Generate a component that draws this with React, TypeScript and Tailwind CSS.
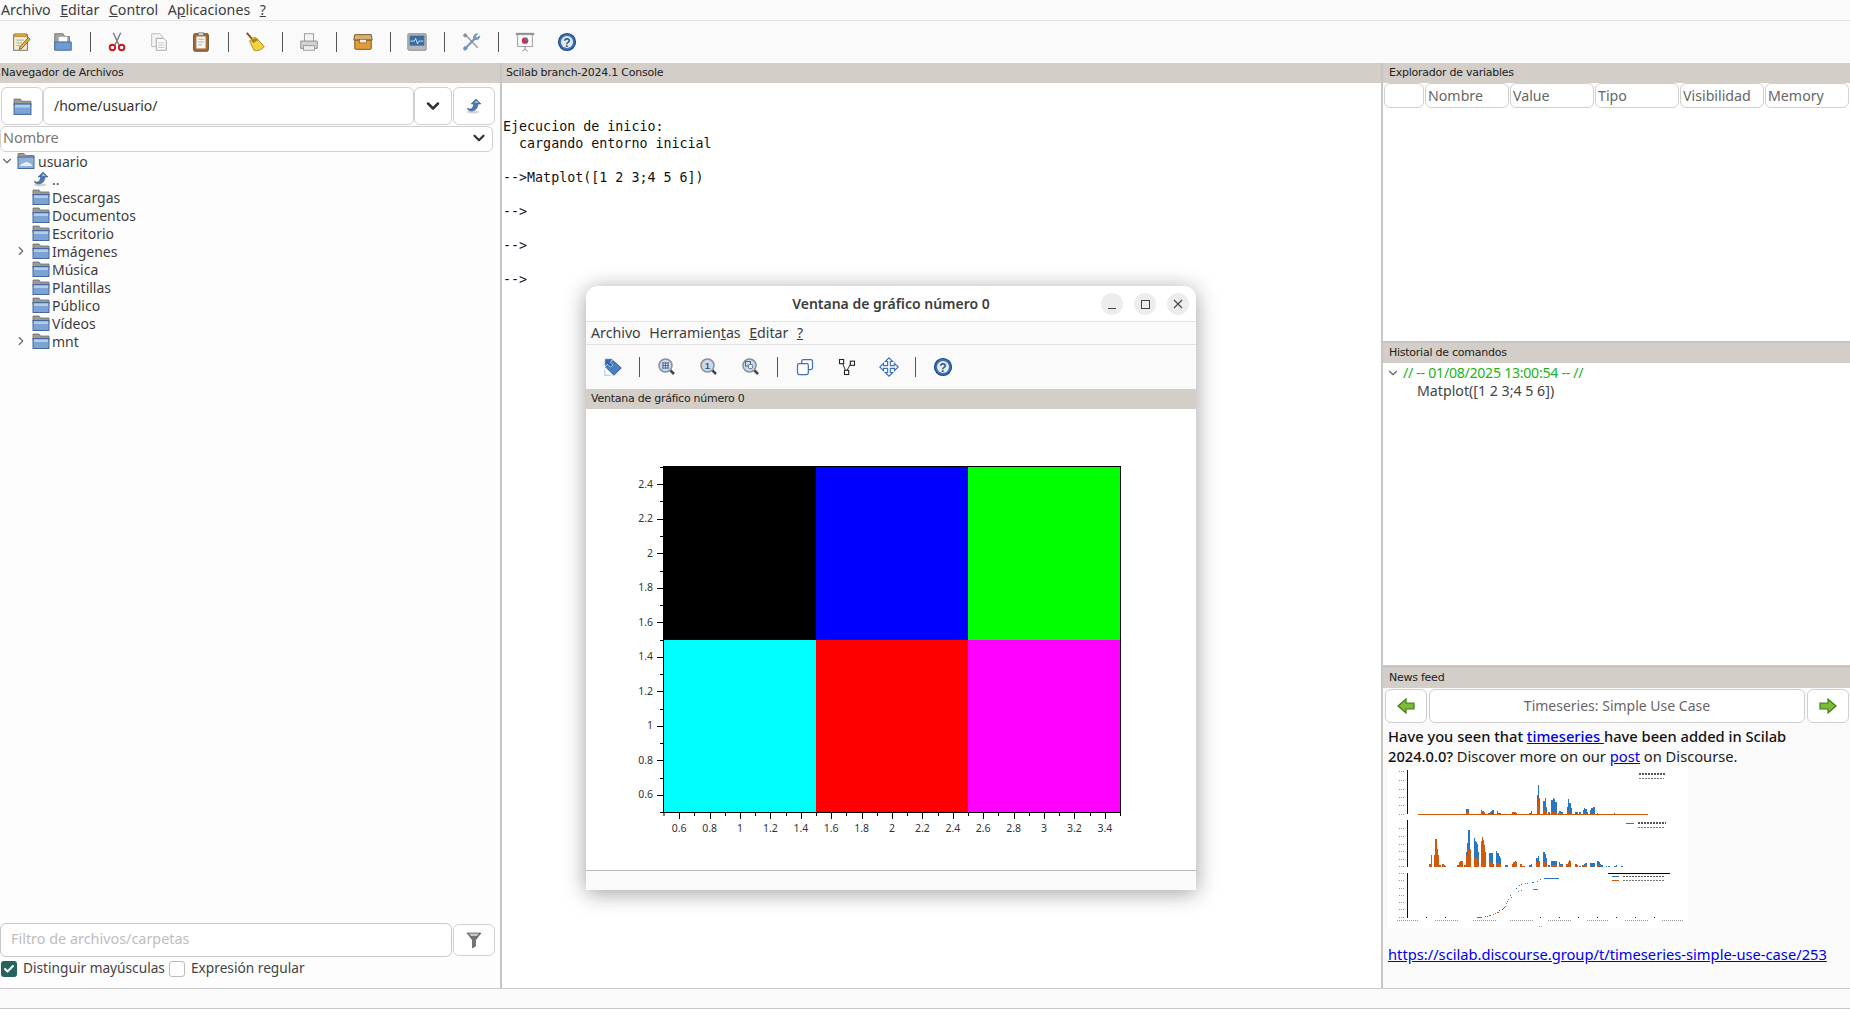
import React from 'react';
import { Check, ChevronDown, ChevronRight } from 'lucide-react';

type Bar = [number, number | null, number | null];

const Sep = () => <div className="w-px h-[20px] mx-[5.5px] bg-[#555]" />;

const ToolBtn = ({ children }: { children: React.ReactNode }) => (
  <div className="w-[42px] h-full flex items-center justify-center">{children}</div>
);

const Ico = ({ children, size = 22 }: { children: React.ReactNode; size?: number }) => (
  <svg width={size} height={size} viewBox="0 0 24 24" fill="none">
    {children}
  </svg>
);

const FolderIcon = ({ size = 18 }: { size?: number }) => (
  <svg width={size} height={size} viewBox="0 0 18 18">
    <path d="M1 2h6l1.500 2H17v4H1z" fill="#9a9a96" stroke="#6d6d6a" strokeWidth="0.8" />
    <rect x="1" y="6.500" width="16" height="10" fill="#7ba4d4" stroke="#46699a" strokeWidth="1" />
    <rect x="2" y="7.500" width="14" height="2.500" fill="#b4cce8" />
  </svg>
);

const HomeFolder = () => (
  <svg width="18" height="18" viewBox="0 0 18 18">
    <path d="M1 1.500h6l1.500 2H17v3H1z" fill="#9a9a96" stroke="#6d6d6a" strokeWidth="0.8" />
    <rect x="1" y="5" width="16" height="11.500" fill="#8fb2dc" stroke="#46699a" strokeWidth="1" />
    <path d="M3 14c1-3 3-2 4-3 1-1.500 4-1.500 5 0 1 0 3 1 3 3z" fill="#e9f0f8" />
  </svg>
);

const UpIcon = () => (
  <svg width="18" height="18" viewBox="0 0 18 18">
    <ellipse cx="8" cy="15" rx="6.500" ry="1.500" fill="#d4d4d4" />
    <path d="M11 2l5 5h-3c0 4-3 7-6.500 7C4 14 2.500 13 2.500 11c1 1 2 1.300 3 1 2-.5 3-2.500 3-5H6z" fill="#4c79ae" stroke="#2c4f7c" strokeWidth="0.5" />
    <path d="M11 3.500L13.500 6H10z" fill="#a9c6e6" />
  </svg>
);

const HelpIcon = () => (
  <svg width="20" height="20" viewBox="0 0 20 20">
    <circle cx="10" cy="10" r="8.500" fill="#3f72b5" stroke="#1f4a85" strokeWidth="1.200" />
    <circle cx="10" cy="10" r="6" fill="#e4ecf6" />
    <text x="10" y="14.500" textAnchor="middle" fontSize="12" fontWeight="700" fill="#2a5796" fontFamily="Liberation Sans">?</text>
  </svg>
);

const Magnifier = ({ children }: { children?: React.ReactNode }) => (
  <svg width="20" height="20" viewBox="0 0 20 20">
    <line x1="12.500" y1="12.500" x2="17" y2="17" stroke="#444" strokeWidth="2.500" />
    <circle cx="8.500" cy="8.500" r="6.500" fill="#cfd8e4" stroke="#8a8f98" strokeWidth="1.500" />
    {children}
  </svg>
);

const MainToolbar = () => (
  <div className="h-[42px] flex items-center bg-[#fafafa]">
    <ToolBtn>
      <Ico>
        <rect x="4" y="4" width="15" height="17" fill="#f4edd3" stroke="#6d6a5e" />
        <path d="M5 3h13v3H5z" fill="#e0a93c" stroke="#9a7323" strokeWidth="0.7" />
        <path d="M7 10h8M7 13h6M7 16h4" stroke="#a8a48f" />
        <path d="M11 17l9-10 2 2-9 10-3 1z" fill="#e3b04b" stroke="#6b4a12" strokeWidth="0.8" />
      </Ico>
    </ToolBtn>
    <ToolBtn>
      <Ico>
        <path d="M3 3h9l2 3h5v14H3z" fill="#a3a3a0" stroke="#747471" />
        <rect x="7" y="6" width="10" height="6" fill="#fff" stroke="#999" strokeWidth="0.6" />
        <path d="M3 12h18v9H3z" fill="#6f9ccf" stroke="#3f679c" />
      </Ico>
    </ToolBtn>
    <Sep />
    <ToolBtn>
      <Ico>
        <path d="M8 2l6 13M16 2l-6 13" stroke="#777" strokeWidth="1.500" />
        <circle cx="7" cy="18" r="3" stroke="#c4171b" strokeWidth="2" />
        <circle cx="17" cy="18" r="3" stroke="#c4171b" strokeWidth="2" />
      </Ico>
    </ToolBtn>
    <ToolBtn>
      <Ico>
        <path d="M4 3h9l3 3v11H4z" fill="#f5f5f5" stroke="#b8b8b8" />
        <path d="M9 8h8l3 3v10H9z" fill="#fcfcfc" stroke="#a0a0a0" />
        <path d="M11 13h7M11 15.500h7M11 18h7" stroke="#c4c4c4" />
      </Ico>
    </ToolBtn>
    <ToolBtn>
      <Ico>
        <rect x="4" y="3" width="16" height="19" rx="1.500" fill="#a5703a" stroke="#5e3d18" />
        <rect x="7" y="6" width="10" height="13" fill="#f5f5f2" />
        <rect x="9" y="2" width="6" height="3" fill="#d8d8d8" stroke="#666" strokeWidth="0.7" />
        <path d="M9 9h6M9 12h6M9 15h4" stroke="#aaa" />
      </Ico>
    </ToolBtn>
    <Sep />
    <ToolBtn>
      <Ico>
        <path d="M3 2l7 8" stroke="#8a5a1d" strokeWidth="2.200" />
        <path d="M6 11l5-4 3 1 8 9c-3 4-8 5-11 4z" fill="#f2d23f" stroke="#a08416" />
        <path d="M8 10l5-2 2 2-5 3z" fill="#a87a2a" />
      </Ico>
    </ToolBtn>
    <Sep />
    <ToolBtn>
      <Ico>
        <rect x="7" y="3" width="10" height="9" fill="#f4f4f4" stroke="#999" />
        <path d="M3 11h18v8H3z" fill="#d2d2d2" stroke="#888" />
        <rect x="6" y="16" width="12" height="5" fill="#eee" stroke="#999" />
      </Ico>
    </ToolBtn>
    <Sep />
    <ToolBtn>
      <Ico>
        <path d="M3 4h18l1 6H2z" fill="#d8b27a" stroke="#7c4d15" />
        <rect x="3" y="10" width="18" height="10" rx="1" fill="#e49b37" stroke="#7c4d15" />
        <rect x="8" y="9" width="8" height="4" fill="#fff2d8" stroke="#7c4d15" strokeWidth="0.7" />
      </Ico>
    </ToolBtn>
    <Sep />
    <ToolBtn>
      <Ico>
        <rect x="2" y="3" width="20" height="18" rx="1" fill="#b4b8bd" stroke="#888" />
        <rect x="4" y="5" width="16" height="11" fill="#3a6c9f" />
        <path d="M5 11h4l1.500-3 2 6 1.500-3h5" stroke="#cfe8ff" strokeWidth="1" />
      </Ico>
    </ToolBtn>
    <Sep />
    <ToolBtn>
      <Ico size={20}>
        <path d="M5 3l15 16" stroke="#9a9da2" strokeWidth="1.800" />
        <rect x="3" y="2" width="4" height="4" fill="#8b8e93" transform="rotate(-45 5 4)" />
        <path d="M20 2l-2.500 3.500 1.500 1.500 3.500-2.500c.3 3.500-3 5.500-5.500 4.500L8 18l-1 3-3 1-1-1 .5-3 3-1 8.500-9c-1-2.500 1.500-6.500 5.500-6z" fill="#6e98c8" stroke="#456c9c" strokeWidth="0.5" />
      </Ico>
    </ToolBtn>
    <Sep />
    <ToolBtn>
      <Ico>
        <rect x="2" y="2" width="20" height="2.500" fill="#8d8d8d" />
        <rect x="4" y="4" width="16" height="13" fill="#fafafa" stroke="#999" />
        <circle cx="12" cy="10.500" r="3.500" fill="#c9304a" />
        <path d="M12 10.500V7a3.500 3.500 0 0 1 3.500 3.500z" fill="#4d7db8" />
        <path d="M12 17v3M9 22l3-2 3 2" stroke="#888" />
      </Ico>
    </ToolBtn>
    <ToolBtn>
      <HelpIcon />
    </ToolBtn>
  </div>
);

const DockHeader = ({ title, inset = 'pl-[1px]' }: { title: string; inset?: string }) => (
  <div className={`h-5 shrink-0 pt-px bg-[#d3cfc8] flex items-center text-[11px] text-[#222] font-['DejaVu_Sans',sans-serif] tracking-[-0.25px] ${inset}`}>
    {title}
  </div>
);

const treeItems = [
  { name: 'Descargas' },
  { name: 'Documentos' },
  { name: 'Escritorio' },
  { name: 'Imágenes', more: true },
  { name: 'Música' },
  { name: 'Plantillas' },
  { name: 'Público' },
  { name: 'Vídeos' },
  { name: 'mnt', more: true },
];

const FileBrowser = () => (
  <div className="w-[500px] flex flex-col bg-[#fdfdfd] text-[#3d3d3d]">
    <DockHeader title="Navegador de Archivos" />
    <div className="h-[39px] mt-[4px] flex shrink-0">
      <div className="w-[42px] h-[38px] ml-px border border-[#d0d0d0] rounded-[6px] bg-white flex items-center justify-center">
        <FolderIcon size={19} />
      </div>
      <div className="w-[371px] h-[38px] border border-[#d0d0d0] rounded-[6px] bg-white pl-[10px] pb-[2px] flex items-center text-[14px] text-[#333]">
        /home/usuario/
      </div>
      <div className="w-[38px] h-[38px] border border-[#d0d0d0] rounded-[6px] bg-white flex items-center justify-center">
        <ChevronDown size={20} strokeWidth={3} color="#333" />
      </div>
      <div className="w-[42px] h-[38px] ml-px border border-[#d0d0d0] rounded-[6px] bg-white flex items-center justify-center">
        <UpIcon />
      </div>
    </div>
    <div className="w-[493px] h-[26px] shrink-0 border border-[#d0d0d0] rounded-[6px] bg-white pl-[2px] pr-[4px] pb-[2px] flex items-center justify-between text-[14.4px] text-[#777]">
      Nombre
      <ChevronDown size={18} strokeWidth={3} color="#333" />
    </div>
    <div className="flex-1 text-[14px] text-[#3d3d3d]">
      <div className="h-[18px] flex items-center">
        <ChevronDown size={14} color="#666" className="mr-[3px]" />
        <HomeFolder />
        <span className="ml-[3px]">usuario</span>
      </div>
      <div className="h-[18px] flex items-center pl-[32px]">
        <UpIcon />
        <span className="ml-[2px]">..</span>
      </div>
      {treeItems.map((item) => (
        <div key={item.name} className="h-[18px] flex items-center pl-[14px]">
          <div className="w-[18px] shrink-0">{item.more && <ChevronRight size={14} color="#666" />}</div>
          <FolderIcon />
          <span className="ml-[2px]">{item.name}</span>
        </div>
      ))}
    </div>
    <div className="h-[65px] shrink-0">
      <div className="flex items-start h-[35px]">
        <div className="w-[452px] h-[34px] border border-[#c8c8c8] rounded-[6px] bg-white pl-[10px] pb-[2px] flex items-center text-[14.4px] text-[#bdbdbd]">
          Filtro de archivos/carpetas
        </div>
        <div className="w-[42px] h-[32px] ml-px mt-px border border-[#d0d0d0] rounded-[6px] bg-white flex items-center justify-center">
          <svg width="16" height="18" viewBox="0 0 16 18">
            <path d="M1 2h14L9.500 9v6l-3 2V9z" fill="#747474" stroke="#444" strokeWidth="0.6" />
            <path d="M3 2.500h10L11 5H5z" fill="#c8c8c8" />
          </svg>
        </div>
      </div>
      <div className="flex items-center h-[18px] mt-[2px] text-[13.7px] text-[#444] whitespace-nowrap">
        <div className="w-4 h-4 ml-px shrink-0 rounded-[3px] bg-[#26625f] flex items-center justify-center">
          <Check size={12} strokeWidth={4} color="#fff" />
        </div>
        <span className="ml-[6px] w-[146px] pb-[2px]">Distinguir mayúsculas</span>
        <div className="w-4 h-4 shrink-0 rounded-[3px] border border-[#bbb] bg-white" />
        <span className="ml-[6px] pb-[2px]">Expresión regular</span>
      </div>
    </div>
  </div>
);

const consoleText = `

Ejecucion de inicio:
  cargando entorno inicial

-->Matplot([1 2 3;4 5 6])

-->

-->

-->`;

const ConsolePanel = () => (
  <div className="flex-1 flex flex-col bg-white">
    <DockHeader title="Scilab branch-2024.1 Console" inset="pl-[4px]" />
    <pre className="pt-[1px] pl-px text-[13.33px] leading-[17px] text-[#111] font-['DejaVu_Sans_Mono',monospace]">
      {consoleText}
    </pre>
  </div>
);

const varCols = ['', 'Nombre', 'Value', 'Tipo', 'Visibilidad', 'Memory'];

const blueBars1: Bar[] = [
  [258, 133, 141], [261, 132, 141], [264, 132, 141], [303, 136, 136], [307, 139, 139], [310, 141, 141], [325, 145, null], [330, 141, null], [334, 138, null], [337, 136, null],
  [350, 139, 145], [355, 143, null], [360, 143, null], [397, 141, 141], [403, 141, 141], [408, 145, null], [448, 145, null], [453, 139, null], [470, 90, 120], [474, 60, 100],
  [477, 98, 122], [490, 108, 135], [494, 100, 125], [498, 125, 140], [505, 140, null], [514, 105, 142], [518, 99, 142], [522, 103, 142], [526, 110, 143], [535, 143, 143],
  [538, 138, 143], [542, 140, 143], [546, 141, 143], [560, 125, 143], [564, 102, 140], [568, 115, 145], [572, 130, null], [586, 141, null], [590, 141, null], [598, 141, null],
  [608, 135, null], [612, 129, null], [616, 132, null], [620, 140, null], [630, 136, null], [634, 130, null], [638, 132, null], [640, 126, null], [651, 144, null], [702, 144, null],
];

const blueBars2: Bar[] = [
  [148, null, 296], [152, null, 270], [163, null, 270], [166, null, 222], [169, null, 252], [172, null, 270], [178, null, 300], [187, null, 297], [190, null, 300], [195, null, 302],
  [232, null, 300], [237, null, 292], [241, null, 288], [244, null, 288], [253, null, 300], [259, 262, 274], [262, 234, 274], [265, 195, 252], [268, 252, 252], [281, 220, 276],
  [284, 228, 282], [287, 232, 276], [290, 238, 276], [293, 262, 292], [303, 228, 228], [306, 216, 216], [309, 226, 226], [312, 240, 240], [315, 262, 262], [326, 264, 292],
  [329, 264, 292], [332, 264, 292], [335, 264, 296], [338, 296, null], [348, 258, 294], [352, 264, 294], [356, 272, 296], [360, 280, 296], [376, 300, null], [380, 300, null],
  [396, 300, 296], [400, 292, 292], [404, 288, 292], [408, 292, 292], [421, 298, 298], [425, 302, 302], [430, 302, 302], [448, 300, null], [453, 298, null], [469, 278, 292],
  [473, 274, 288], [476, 288, 296], [490, 262, 290], [494, 268, 288], [498, 278, 298], [505, 300, null], [514, 288, 300], [518, 288, 300], [522, 288, 300], [526, 288, 300],
  [537, 292, 298], [541, 296, 300], [545, 296, 300], [559, 296, 296], [563, 290, 290], [567, 284, 284], [570, 288, 288], [586, 298, 298], [590, 300, 300], [598, 302, null],
  [607, 300, 302], [612, 296, 302], [616, 294, 300], [630, 294, 302], [634, 294, null], [640, 294, null], [652, 288, 300], [656, 292, null], [660, 296, null], [664, 300, null],
  [678, 303, null], [685, 303, null], [703, 302, null], [708, 300, null], [724, 303, null],
];

const dots3Blue = [
  [316, 454], [322, 452], [330, 451], [340, 448], [346, 445], [352, 440], [358, 436], [365, 432], [370, 428], [375, 422], [378, 415], [381, 408], [385, 403], [391, 391], [408, 370],
  [417, 361], [423, 357], [435, 355], [441, 355], [455, 351], [460, 351], [470, 347], [480, 343],
];
const dots3Orange = [
  [328, 451], [354, 441], [372, 426], [375, 423], [394, 397], [415, 379], [424, 376],
];
const tickRow = [50, 165, 280, 390, 505, 620, 735, 845];

const BLUE = '#2b76c0';
const ORANGE = '#d4570e';

const bars = (data: Bar[], base: number) =>
  data.map(([x, blue, orange]) => (
    <g key={x}>
      {blue !== null && <rect x={x} y={blue} width={3.500} height={base - blue} fill={BLUE} />}
      {orange !== null && <rect x={x} y={orange} width={3.500} height={base - orange} fill={ORANGE} />}
    </g>
  ));

const NewsChart = () => (
  <svg width="300" height="162" viewBox="24 3 900 486" shapeRendering="crispEdges" className="block bg-white">
    <line x1="83" y1="15" x2="83" y2="148" stroke="#111" strokeWidth="3" />
    <line x1="83" y1="165" x2="83" y2="305" stroke="#111" strokeWidth="3" />
    <line x1="83" y1="325" x2="83" y2="460" stroke="#111" strokeWidth="3" />
    {[20, 46, 72, 97, 122, 147, 190, 213, 238, 260, 282, 304, 325, 346, 369, 392, 412, 434, 457].map((y) => (
      <line key={y} x1="56" y1={y} x2="76" y2={y} stroke="#999" strokeWidth="3" strokeDasharray="3 4" />
    ))}
    {bars(blueBars1, 148)}
    <rect x="115" y="147" width="690" height="3" fill={ORANGE} />
    {bars(blueBars2, 305)}
    <rect x="292" y="456" width="14" height="3" fill={BLUE} />
    {dots3Blue.map(([x, y]) => (
      <rect key={x} x={x} y={y} width="3" height="3" fill={BLUE} />
    ))}
    {dots3Orange.map(([x, y]) => (
      <rect key={x} x={x} y={y} width="3" height="3" fill={ORANGE} />
    ))}
    <rect x="460" y="372" width="14" height="3" fill={ORANGE} />
    <rect x="492" y="339" width="45" height="3" fill={BLUE} />
    {tickRow.map((x) => (
      <line key={x} x1={x} y1="466" x2={x + 68} y2="466" stroke="#999" strokeWidth="3" strokeDasharray="3 3" />
    ))}
    {[138, 196, 480, 538, 595, 652, 710, 766, 824].map((x) => (
      <line key={x} x1={x} y1="457" x2={x} y2="460" stroke="#333" strokeWidth="3" />
    ))}
    <line x1="476" y1="483" x2="488" y2="483" stroke="#999" strokeWidth="3" strokeDasharray="3 3" />
    <line x1="776" y1="26" x2="858" y2="26" stroke="#555" strokeWidth="6" strokeDasharray="6 3" />
    <line x1="776" y1="39" x2="852" y2="39" stroke="#777" strokeWidth="3" strokeDasharray="6 3" />
    <line x1="738" y1="175" x2="762" y2="175" stroke={BLUE} strokeWidth="3" />
    <line x1="774" y1="175" x2="858" y2="175" stroke="#555" strokeWidth="6" strokeDasharray="6 3" />
    <line x1="774" y1="188" x2="852" y2="188" stroke="#777" strokeWidth="3" strokeDasharray="6 3" />
    <line x1="685" y1="324" x2="870" y2="324" stroke="#000" strokeWidth="3" />
    <line x1="695" y1="333" x2="718" y2="333" stroke={BLUE} strokeWidth="3" />
    <line x1="730" y1="333" x2="852" y2="333" stroke="#555" strokeWidth="3" strokeDasharray="6 3" />
    <line x1="695" y1="346" x2="718" y2="346" stroke={ORANGE} strokeWidth="3" />
    <line x1="730" y1="346" x2="852" y2="346" stroke="#777" strokeWidth="3" strokeDasharray="6 3" />
  </svg>
);

const NavArrow = ({ flip }: { flip?: boolean }) => (
  <svg width="18" height="16" viewBox="0 0 18 16" className={flip ? 'scale-x-[-1]' : ''}>
    <path d="M1 8l8-7v4h8v6H9v4z" fill="#7cbb3a" stroke="#3e7d18" strokeWidth="1.200" />
  </svg>
);

const RightColumn = () => (
  <div className="w-[467px] flex flex-col">
    <div className="h-[278px] shrink-0 flex flex-col bg-white">
      <DockHeader title="Explorador de variables" inset="pl-[6px]" />
      <div className="flex pl-[1px] pr-[1px] gap-[1px]">
        {varCols.map((col, i) => (
          <div
            key={col}
            className={`${i === 0 ? 'w-[40px]' : 'w-[84px]'} h-[25px] border border-[#d0d0d0] rounded-[6px] bg-white pl-[2px] flex items-center text-[14.2px] text-[#666]`}
          >
            {col}
          </div>
        ))}
      </div>
    </div>
    <div className="h-[2px] shrink-0 bg-[#c6c6c6]" />
    <div className="h-[322px] shrink-0 flex flex-col bg-white">
      <DockHeader title="Historial de comandos" inset="pl-[6px]" />
      <div className="pt-px text-[14.2px] leading-[18px]">
        <div className="flex items-center h-[18px] pl-[3px] text-[#1db31d] tracking-[-0.3px]">
          <ChevronDown size={14} color="#666" className="mr-[3px]" />
          // -- 01/08/2025 13:00:54 -- //
        </div>
        <div className="pl-[34px] text-[#444]">Matplot([1 2 3;4 5 6])</div>
      </div>
    </div>
    <div className="h-[3px] shrink-0 bg-[#c6c6c6]" />
    <div className="flex-1 flex flex-col bg-[#fafafa]">
      <DockHeader title="News feed" inset="pl-[6px]" />
      <div className="flex h-[34px] mt-px shrink-0 pl-[2px] gap-[2px]">
        <div className="w-[42px] border border-[#d0d0d0] rounded-[6px] bg-white flex items-center justify-center">
          <NavArrow />
        </div>
        <div className="w-[376px] border border-[#d0d0d0] rounded-[6px] bg-white pb-[2px] flex items-center justify-center text-[14px] text-[#666]">
          Timeseries: Simple Use Case
        </div>
        <div className="w-[42px] border border-[#d0d0d0] rounded-[6px] bg-white flex items-center justify-center">
          <NavArrow flip />
        </div>
      </div>
      <div className="pl-[5px] pt-[4px] text-[14.7px] leading-[19.500px] text-[#222]">
        <p className="font-medium text-[#111]">
          Have you seen that <a className="text-[#0000ee] underline">timeseries </a>have been added in Scilab
        </p>
        <p>
          <span className="font-medium text-[#111]">2024.0.0?</span> Discover more on our{' '}
          <a className="text-[#0000ee] underline">post</a> on Discourse.
        </p>
        <NewsChart />
        <a className="block mt-[17px] text-[#0000ee] underline">https://scilab.discourse.group/t/timeseries-simple-use-case/253</a>
      </div>
    </div>
  </div>
);

const yTicks = [0.6, 0.8, 1, 1.2, 1.4, 1.6, 1.8, 2, 2.2, 2.4];
const xTicks = [0.6, 0.8, 1, 1.2, 1.4, 1.6, 1.8, 2, 2.2, 2.4, 2.6, 2.8, 3, 3.2, 3.4];

const px = (v: number) => 664 + (v - 0.5) * 152;
const py = (v: number) => 812 - (v - 0.5) * 172.5;

const MatplotChart = () => (
  <svg width="610" height="461" viewBox="586 409 610 461" className="block">
    <rect x="664" y="467" width="152" height="173" fill="#000" />
    <rect x="816" y="467" width="152" height="173" fill="#0000ff" />
    <rect x="968" y="467" width="152" height="173" fill="#00ff00" />
    <rect x="664" y="640" width="152" height="172" fill="#00ffff" />
    <rect x="816" y="640" width="152" height="172" fill="#ff0000" />
    <rect x="968" y="640" width="152" height="172" fill="#ff00ff" />
    <rect x="663.500" y="466.500" width="457" height="346" fill="none" stroke="#000" />
    {yTicks.map((v) => (
      <g key={v}>
        <line x1="657" x2="663" y1={Math.round(py(v)) + 0.5} y2={Math.round(py(v)) + 0.5} stroke="#000" />
        <line x1="660" x2="663" y1={Math.round(py(v + 0.1)) + 0.5} y2={Math.round(py(v + 0.1)) + 0.5} stroke="#000" />
        <text x="653" y={py(v) + 3.500} textAnchor="end" fontSize="10.500" fill="#333" fontFamily="Noto Sans">
          {v}
        </text>
      </g>
    ))}
    <line x1="660" x2="663" y1="812.500" y2="812.500" stroke="#000" />
    {xTicks.map((v) => (
      <g key={v}>
        <line y1="813" y2="819" x1={Math.round(px(v)) + 0.5} x2={Math.round(px(v)) + 0.5} stroke="#000" />
        <line y1="813" y2="816" x1={Math.round(px(v + 0.1)) + 0.5} x2={Math.round(px(v + 0.1)) + 0.5} stroke="#000" />
        <text x={px(v)} y="832" textAnchor="middle" fontSize="10.500" fill="#333" fontFamily="Noto Sans">
          {v}
        </text>
      </g>
    ))}
    <line y1="813" y2="816" x1="664" x2="664" stroke="#000" />
  </svg>
);

const GraphWindow = () => (
  <div className="absolute left-[586px] top-[286px] w-[610px] h-[604px] flex flex-col rounded-t-[12px] bg-[#fafafa] shadow-[0_3px_22px_rgba(0,0,0,0.38)]">
    <div className="h-[36px] shrink-0 relative flex items-center justify-center rounded-t-[12px] bg-white border-b border-[#e2e2e2] text-[14px] font-semibold text-[#3d3d3d]">
      Ventana de gráfico número 0
      <div className="absolute right-[7px] top-[7px] flex gap-[11px]">
        <div className="w-[22px] h-[22px] rounded-full bg-[#ededed] flex items-end justify-center pb-[6px]">
          <div className="w-[8px] h-px bg-[#444]" />
        </div>
        <div className="w-[22px] h-[22px] rounded-full bg-[#ededed] flex items-center justify-center">
          <div className="w-[9px] h-[9px] border border-[#444]" />
        </div>
        <div className="w-[22px] h-[22px] rounded-full bg-[#ededed] flex items-center justify-center">
          <svg width="10" height="10" viewBox="0 0 10 10">
            <path d="M1 1l8 8M9 1l-8 8" stroke="#444" strokeWidth="1.100" />
          </svg>
        </div>
      </div>
    </div>
    <div className="h-[23px] shrink-0 flex items-center pl-[5px] gap-[8.5px] border-b border-[#e2e2e2] text-[14.2px] text-[#3d3d3d]">
      <span>Archivo</span>
      <span>Herramien<u>t</u>as</span>
      <span><u>E</u>ditar</span>
      <span><u>?</u></span>
    </div>
    <div className="h-[44px] shrink-0 pl-[5.5px] flex items-center">
      <ToolBtn>
        <Ico>
          <path d="M4 12l8-7 9 8-8 8z" fill="#4a7fc0" stroke="#27558f" />
          <path d="M3 3h9L9 7l3 3-3 2-3-3-3 3z" fill="#2f66ad" stroke="#fff" strokeWidth="0.6" />
          <path d="M3 15v6h6" stroke="#9db9dc" />
        </Ico>
      </ToolBtn>
      <Sep />
      <ToolBtn>
        <Magnifier>
          <path d="M5 6h7M5 8.500h7M5 11h7M6 5v7M8.500 5v7M11 5v7" stroke="#3b6cab" strokeWidth="0.900" />
        </Magnifier>
      </ToolBtn>
      <ToolBtn>
        <Magnifier>
          <text x="8.500" y="12" textAnchor="middle" fontSize="9.500" fontWeight="700" fill="#2d5f9f" fontFamily="Liberation Sans">1</text>
        </Magnifier>
      </ToolBtn>
      <ToolBtn>
        <Magnifier>
          <rect x="4.500" y="4.500" width="5" height="4.500" fill="none" stroke="#3b6cab" />
          <circle cx="9.500" cy="9.500" r="2.300" fill="#f4f4f4" stroke="#3b6cab" strokeWidth="0.900" />
        </Magnifier>
      </ToolBtn>
      <Sep />
      <ToolBtn>
        <Ico size={20}>
          <rect x="8" y="3" width="13" height="12" rx="2" fill="#fff" stroke="#3f72b5" strokeWidth="1.500" />
          <rect x="3" y="8" width="13" height="13" rx="2" fill="#fff" stroke="#3f72b5" strokeWidth="1.500" />
        </Ico>
      </ToolBtn>
      <ToolBtn>
        <Ico size={20}>
          <path d="M6 6l5 12M11 18l6-11" stroke="#333" strokeWidth="1.200" fill="none" />
          <rect x="3" y="3" width="5" height="5" fill="#fff" stroke="#222" strokeWidth="1.300" />
          <rect x="16" y="5" width="5" height="5" fill="#fff" stroke="#222" strokeWidth="1.300" />
          <rect x="9" y="16" width="5" height="5" fill="#fff" stroke="#222" strokeWidth="1.300" />
        </Ico>
      </ToolBtn>
      <ToolBtn>
        <Ico>
          <path d="M12 2l4 4h-2.500v4.500H18V8l4 4-4 4v-2.500h-4.500V18H16l-4 4-4-4h2.500v-4.500H6V16l-4-4 4-4v2.500h4.500V6H8z" fill="#fff" stroke="#3f72b5" strokeWidth="1.300" />
        </Ico>
      </ToolBtn>
      <Sep />
      <ToolBtn>
        <HelpIcon />
      </ToolBtn>
    </div>
    <DockHeader title="Ventana de gráfico número 0" inset="pl-[5px]" />
    <div className="h-[461px] shrink-0 bg-white">
      <MatplotChart />
    </div>
    <div className="flex-1 border-t border-[#b8b8b8] bg-[#fafafa]" />
  </div>
);

export default function App() {
  return (
    <div className="relative w-[1850px] h-[1009px] overflow-hidden bg-[#fafafa] font-['Noto_Sans',sans-serif] text-[#333]">
      <div className="h-[21px] flex items-center pl-px pb-px gap-[9.5px] border-b border-[#e4e4e4] text-[14.2px] text-[#3d3d3d]">
        <span>Archivo</span>
        <span><u>E</u>ditar</span>
        <span><u>C</u>ontrol</span>
        <span>A<u>p</u>licaciones</span>
        <span><u>?</u></span>
      </div>
      <MainToolbar />
      <div className="h-[925px] flex">
        <FileBrowser />
        <div className="w-[2px] bg-[#c6c6c6]" />
        <ConsolePanel />
        <div className="w-[2px] bg-[#c6c6c6]" />
        <RightColumn />
      </div>
      <div className="h-[21px] border-y border-[#c8c8c8] bg-[#fafafa]" />
      <GraphWindow />
    </div>
  );
}
